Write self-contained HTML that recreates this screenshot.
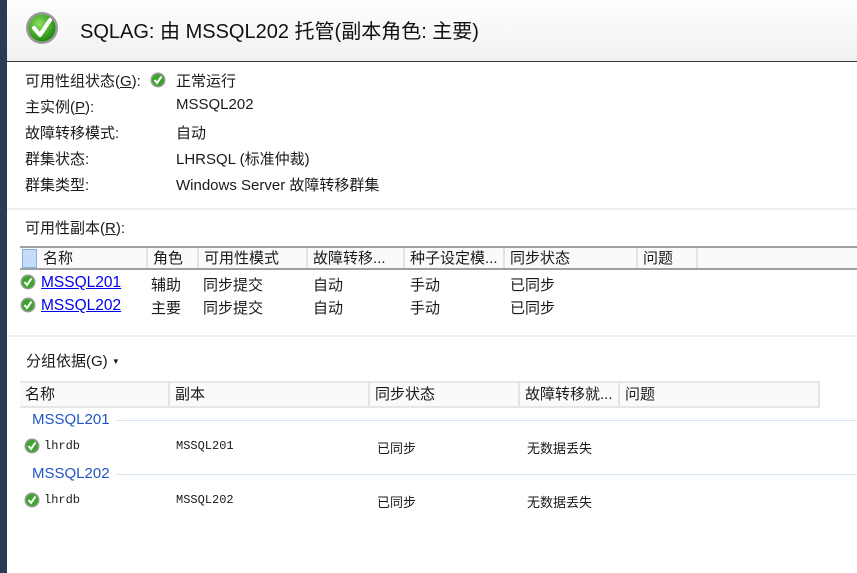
<!DOCTYPE html>
<html><head><meta charset="utf-8"><style>
*{margin:0;padding:0;box-sizing:border-box}
body{width:857px;height:573px;overflow:hidden;background:#fff;position:relative;font-family:"Liberation Sans","Noto Sans CJK SC",sans-serif;font-size:15px;color:#1a1a1a}
.a{position:absolute;white-space:nowrap}
.bar{left:0;top:0;width:7px;height:573px;background:#2b3a55}
.hdr{left:7px;top:0;width:850px;height:62px;background:linear-gradient(#ffffff,#f0f0f0);border-bottom:1px solid #333}
.sep{height:2px;background:#eeeeee;left:7px;width:850px}
.th{position:absolute;top:0;height:100%;border-right:2px solid #e3e3e3;padding-left:5px;line-height:21px;background:#fafafa;font-size:15px}
.lnk{color:#0000ee;text-decoration:underline;font-size:15.5px}
.mono{font-family:"Liberation Mono","Noto Sans CJK SC",monospace;font-size:12px}
.grp{color:#1f56c0;font-size:15px}
.gl{height:1px;background:#d6e6f5}
.s13{font-size:13px}
</style></head><body>
<div class="a bar"></div>
<div class="a hdr"></div>
<svg class="a" style="left:25px;top:11px" width="34" height="34" viewBox="0 0 34 34"><defs><radialGradient id="g" cx="40%" cy="35%" r="65%"><stop offset="0" stop-color="#8fe060"/><stop offset="1" stop-color="#1f8a10"/></radialGradient></defs><circle cx="17" cy="17" r="16" fill="#9a9a9a"/><circle cx="17" cy="17" r="13.5" fill="url(#g)"/><path d="M9 17 L15 24 L25 9" stroke="#fff" stroke-width="4" fill="none" stroke-linecap="round" stroke-linejoin="round"/></svg>
<div class="a" style="left:80px;top:15px;font-size:20px;color:#111">SQLAG: 由 MSSQL202 托管(副本角色: 主要)</div>

<div class="a" style="left:25px;top:70px">可用性组状态(<u>G</u>):</div>
<svg class="a" style="left:150px;top:72px" width="16" height="16" viewBox="0 0 16 16"><circle cx="8" cy="8" r="7.5" fill="#999"/><circle cx="8" cy="8" r="6" fill="#3aa52a"/><path d="M4.5 8 L7 11 L11.5 4.5" stroke="#fff" stroke-width="2" fill="none"/></svg>
<div class="a" style="left:176px;top:70px">正常运行</div>
<div class="a" style="left:25px;top:96px">主实例(<u>P</u>):</div><div class="a" style="left:176px;top:96px">MSSQL202</div>
<div class="a" style="left:25px;top:122px">故障转移模式:</div><div class="a" style="left:176px;top:122px">自动</div>
<div class="a" style="left:25px;top:148px">群集状态:</div><div class="a" style="left:176px;top:148px">LHRSQL (标准仲裁)</div>
<div class="a" style="left:25px;top:174px">群集类型:</div><div class="a" style="left:176px;top:174px">Windows Server 故障转移群集</div>
<div class="a sep" style="top:208px"></div>
<div class="a" style="left:25px;top:217px">可用性副本(<u>R</u>):</div>

<div class="a" style="left:20px;top:246px;width:837px;height:24px;border-top:2px solid #a0a0a0;border-bottom:2px solid #a0a0a0;background:#fafafa">
<div class="a" style="left:2px;top:1px;width:15px;height:19px;background:#c5dcf8;border:1px solid #7fb2e6"></div>
<div class="th" style="left:18px;width:110px">名称</div>
<div class="th" style="left:128px;width:51px">角色</div>
<div class="th" style="left:179px;width:109px">可用性模式</div>
<div class="th" style="left:288px;width:97px">故障转移...</div>
<div class="th" style="left:385px;width:100px">种子设定模...</div>
<div class="th" style="left:485px;width:133px">同步状态</div>
<div class="th" style="left:618px;width:60px">问题</div>
</div>
<svg class="a" style="left:20px;top:274px" width="16" height="16" viewBox="0 0 16 16"><circle cx="8" cy="8" r="7.5" fill="#999"/><circle cx="8" cy="8" r="6" fill="#3aa52a"/><path d="M4.5 8 L7 11 L11.5 4.5" stroke="#fff" stroke-width="2" fill="none"/></svg>
<div class="a lnk" style="left:41px;top:274px">MSSQL201</div>
<div class="a" style="left:151px;top:274px">辅助</div><div class="a" style="left:203px;top:274px">同步提交</div><div class="a" style="left:313px;top:274px">自动</div><div class="a" style="left:410px;top:274px">手动</div><div class="a" style="left:510px;top:274px">已同步</div>
<svg class="a" style="left:20px;top:297px" width="16" height="16" viewBox="0 0 16 16"><circle cx="8" cy="8" r="7.5" fill="#999"/><circle cx="8" cy="8" r="6" fill="#3aa52a"/><path d="M4.5 8 L7 11 L11.5 4.5" stroke="#fff" stroke-width="2" fill="none"/></svg>
<div class="a lnk" style="left:41px;top:297px">MSSQL202</div>
<div class="a" style="left:151px;top:297px">主要</div><div class="a" style="left:203px;top:297px">同步提交</div><div class="a" style="left:313px;top:297px">自动</div><div class="a" style="left:410px;top:297px">手动</div><div class="a" style="left:510px;top:297px">已同步</div>
<div class="a sep" style="top:335px"></div>

<div class="a" style="left:26px;top:350px">分组依据(G) <span style="font-size:8px;vertical-align:2px">▼</span></div>
<div class="a" style="left:20px;top:381px;width:800px;height:27px;border-top:2px solid #e6e6e6;border-bottom:2px solid #e6e6e6;background:#fafafa">
<div class="th" style="left:0;width:150px;line-height:23px">名称</div>
<div class="th" style="left:150px;width:200px;line-height:23px">副本</div>
<div class="th" style="left:350px;width:150px;line-height:23px">同步状态</div>
<div class="th" style="left:500px;width:100px;line-height:23px">故障转移就...</div>
<div class="th" style="left:600px;width:200px;line-height:23px">问题</div>
</div>
<div class="a grp" style="left:32px;top:411px">MSSQL201</div><div class="a gl" style="left:116px;top:420px;width:741px"></div>
<svg class="a" style="left:24px;top:438px" width="16" height="16" viewBox="0 0 16 16"><circle cx="8" cy="8" r="7.5" fill="#999"/><circle cx="8" cy="8" r="6" fill="#3aa52a"/><path d="M4.5 8 L7 11 L11.5 4.5" stroke="#fff" stroke-width="2" fill="none"/></svg>
<div class="a mono" style="left:44px;top:439px">lhrdb</div><div class="a mono" style="left:176px;top:439px">MSSQL201</div>
<div class="a s13" style="left:377px;top:438px">已同步</div><div class="a s13" style="left:527px;top:438px">无数据丢失</div>
<div class="a grp" style="left:32px;top:465px">MSSQL202</div><div class="a gl" style="left:116px;top:474px;width:741px"></div>
<svg class="a" style="left:24px;top:492px" width="16" height="16" viewBox="0 0 16 16"><circle cx="8" cy="8" r="7.5" fill="#999"/><circle cx="8" cy="8" r="6" fill="#3aa52a"/><path d="M4.5 8 L7 11 L11.5 4.5" stroke="#fff" stroke-width="2" fill="none"/></svg>
<div class="a mono" style="left:44px;top:493px">lhrdb</div><div class="a mono" style="left:176px;top:493px">MSSQL202</div>
<div class="a s13" style="left:377px;top:492px">已同步</div><div class="a s13" style="left:527px;top:492px">无数据丢失</div>
</body></html>
